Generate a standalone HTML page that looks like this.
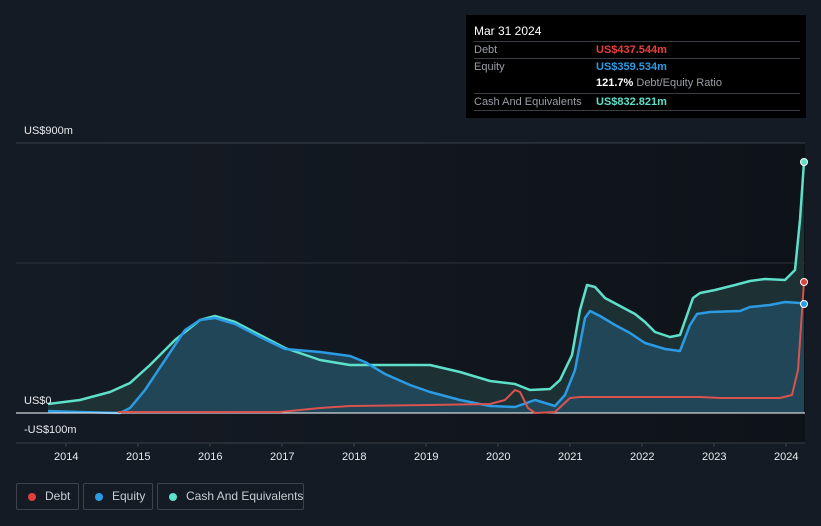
<!DOCTYPE html>
<html><head><meta charset="utf-8"><style>
body{margin:0;width:821px;height:526px;background:#151b25;font-family:"Liberation Sans",sans-serif;overflow:hidden;position:relative}
.tt{position:absolute;left:466px;top:15px;width:340px;height:103px;background:#000;color:#fff;font-size:11px}
.tt .d{position:absolute;left:8px;top:9px;font-size:12px}
.row{position:absolute;left:8px;width:326px;border-top:1px solid #3a3d44;height:17px;line-height:17px}
.row .l{position:absolute;left:0;color:#9a9ea6}
.row .v{position:absolute;left:122px;font-weight:bold;white-space:nowrap}
.ax{position:absolute;color:#e8eaee;font-size:11px;white-space:nowrap}
.leg{position:absolute;top:483px;height:27px;border:1px solid #3d424c;border-radius:2px;color:#c9ccd2;font-size:12px;line-height:25px;box-sizing:border-box;white-space:nowrap}
.leg i{position:absolute;left:11px;top:9px;width:8px;height:8px;border-radius:50%}
</style></head><body>
<svg width="821" height="526" style="position:absolute;left:0;top:0">
<defs>
<linearGradient id="bg" x1="0" x2="1"><stop offset="0" stop-color="#151b25"/><stop offset="1" stop-color="#0e1219"/></linearGradient>
</defs>
<rect x="48" y="143" width="757" height="300" fill="url(#bg)"/>
<line x1="16" y1="143" x2="805" y2="143" stroke="#3a3f48"/>
<line x1="16" y1="263" x2="805" y2="263" stroke="#2c313a"/>
<line x1="16" y1="443" x2="805" y2="443" stroke="#3a3f48"/>
<g stroke="#3a3f48"><line x1="66" y1="443" x2="66" y2="447"/><line x1="138" y1="443" x2="138" y2="447"/><line x1="210" y1="443" x2="210" y2="447"/><line x1="282" y1="443" x2="282" y2="447"/><line x1="354" y1="443" x2="354" y2="447"/><line x1="426" y1="443" x2="426" y2="447"/><line x1="498" y1="443" x2="498" y2="447"/><line x1="570" y1="443" x2="570" y2="447"/><line x1="642" y1="443" x2="642" y2="447"/><line x1="714" y1="443" x2="714" y2="447"/><line x1="786" y1="443" x2="786" y2="447"/></g>
<path d="M48,404 L80,400 L110,392 L130,383 L150,365 L175,340 L200,320 L215,316 L235,322 L260,335 L285,348 L320,360 L350,365 L430,365 L460,372 L490,381 L515,384 L530,390 L550,389 L560,380 L572,355 L580,310 L587,285 L595,287 L605,298 L620,306 L635,314 L645,322 L655,332 L670,337 L680,335 L693,298 L700,293 L715,290 L735,285 L750,281 L765,279 L785,280 L795,270 L800,220 L804,162 L804,413 L48,413Z" fill="#1f3437" opacity="0.9"/>
<path d="M48,411 L80,412 L120,413 L130,408 L145,390 L165,360 L185,330 L200,320 L215,318 L235,324 L260,337 L285,349 L320,352 L350,356 L365,362 L385,374 L410,385 L430,392 L460,400 L490,406 L515,407 L535,400 L555,406 L565,395 L575,370 L585,318 L590,311 L600,316 L615,325 L630,333 L645,343 L665,349 L680,351 L690,325 L697,314 L710,312 L740,311 L750,307 L770,305 L785,302 L800,303 L804,304 L804,413 L48,413Z" fill="#214a5e" opacity="0.85"/>
<path d="M48,404 L80,400 L110,392 L130,383 L150,365 L175,340 L200,320 L215,316 L235,322 L260,335 L285,348 L320,360 L350,365 L430,365 L460,372 L490,381 L515,384 L530,390 L550,389 L560,380 L572,355 L580,310 L587,285 L595,287 L605,298 L620,306 L635,314 L645,322 L655,332 L670,337 L680,335 L693,298 L700,293 L715,290 L735,285 L750,281 L765,279 L785,280 L795,270 L800,220 L804,162" fill="none" stroke="#5ee0c8" stroke-width="2.5" stroke-linejoin="round"/>
<path d="M48,411 L80,412 L120,413 L130,408 L145,390 L165,360 L185,330 L200,320 L215,318 L235,324 L260,337 L285,349 L320,352 L350,356 L365,362 L385,374 L410,385 L430,392 L460,400 L490,406 L515,407 L535,400 L555,406 L565,395 L575,370 L585,318 L590,311 L600,316 L615,325 L630,333 L645,343 L665,349 L680,351 L690,325 L697,314 L710,312 L740,311 L750,307 L770,305 L785,302 L800,303 L804,304" fill="none" stroke="#2b9be3" stroke-width="2.5" stroke-linejoin="round"/>
<line x1="16" y1="413" x2="805" y2="413" stroke="#fff" stroke-width="1"/>
<path d="M118,412 L280,412 L320,408 L350,406 L430,405 L490,404 L505,400 L515,390 L520,392 L528,408 L535,413 L555,412 L570,398 L580,397 L700,397 L720,398 L780,398 L792,395 L798,370 L804,282" fill="none" stroke="#d9534f" stroke-width="2" stroke-linejoin="round"/>
<circle cx="804" cy="162" r="3.5" fill="#5ee0c8" stroke="#fff" stroke-width="1"/>
<circle cx="804" cy="282" r="3.5" fill="#e0403d" stroke="#fff" stroke-width="1"/>
<circle cx="804" cy="304" r="3.5" fill="#2b9be3" stroke="#fff" stroke-width="1"/>
</svg>
<div class="ax" style="left:24px;top:125px">US$900m</div>
<div class="ax" style="left:24px;top:395px">US$0</div>
<div class="ax" style="left:24px;top:424px">-US$100m</div>
<div class="ax" style="left:54px;top:451px">2014</div>
<div class="ax" style="left:126px;top:451px">2015</div>
<div class="ax" style="left:198px;top:451px">2016</div>
<div class="ax" style="left:270px;top:451px">2017</div>
<div class="ax" style="left:342px;top:451px">2018</div>
<div class="ax" style="left:414px;top:451px">2019</div>
<div class="ax" style="left:486px;top:451px">2020</div>
<div class="ax" style="left:558px;top:451px">2021</div>
<div class="ax" style="left:630px;top:451px">2022</div>
<div class="ax" style="left:702px;top:451px">2023</div>
<div class="ax" style="left:774px;top:451px">2024</div>
<div class="tt">
<div class="d">Mar 31 2024</div>
<div class="row" style="top:26px"><span class="l">Debt</span><span class="v" style="color:#e8403d">US$437.544m</span></div>
<div class="row" style="top:43px"><span class="l">Equity</span><span class="v" style="color:#2b9be3">US$359.534m</span></div>
<div class="row" style="top:60px;border-top:none"><span class="v" style="color:#fff">121.7% <span style="color:#9a9ea6;font-weight:normal">Debt/Equity Ratio</span></span></div>
<div class="row" style="top:78px"><span class="l">Cash And Equivalents</span><span class="v" style="color:#5ee0c8">US$832.821m</span></div>
<div class="row" style="top:95px"></div>
</div>
<div class="leg" style="left:16px;width:63px"><i style="background:#e0403d"></i><span style="position:absolute;left:28px">Debt</span></div>
<div class="leg" style="left:83px;width:70px"><i style="background:#2b9be3"></i><span style="position:absolute;left:28px">Equity</span></div>
<div class="leg" style="left:157px;width:147px"><i style="background:#5ee0c8"></i><span style="position:absolute;left:28px">Cash And Equivalents</span></div>
</body></html>
